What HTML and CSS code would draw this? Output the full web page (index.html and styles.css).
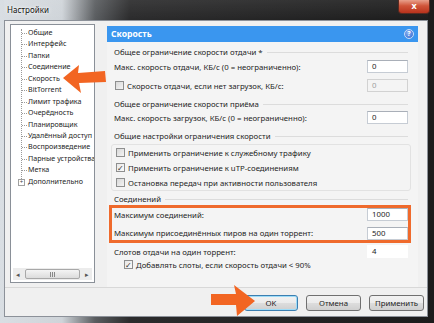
FILE: index.html
```html
<!DOCTYPE html>
<html lang="ru">
<head>
<meta charset="utf-8">
<title>Настройки</title>
<link rel="stylesheet" href="styles.css">
</head>
<body>
<div class="window">
  <div class="titlebar">
    <span class="title">Настройки</span>
    <span class="close">x</span>
  </div>
  <div class="client">
    <div class="main">
      <div class="tree">
        <div class="tree-list">
          <div class="item">Общие</div>
          <div class="item">Интерфейс</div>
          <div class="item">Папки</div>
          <div class="item">Соединение</div>
          <div class="item">Скорость</div>
          <div class="item">BitTorrent</div>
          <div class="item">Лимит трафика</div>
          <div class="item">Очерёдность</div>
          <div class="item">Планировщик</div>
          <div class="item">Удалённый доступ</div>
          <div class="item">Воспроизведение</div>
          <div class="item">Парные устройства</div>
          <div class="item">Метка</div>
          <div class="item last"><span class="plus">+</span>Дополнительно</div>
        </div>
        <div class="hscroll">
          <span class="arr">◂</span>
          <span class="thumb"><span class="grip"></span></span>
          <span class="arr">▸</span>
        </div>
      </div>
      <div class="panel">
        <div class="header">
          <span>Скорость</span>
          <span class="help">?</span>
        </div>
        <div class="content">
          <div class="glabel">Общее ограничение скорости отдачи *</div>
          <div class="row r1"><span>Макс. скорость отдачи, КБ/с (0 = неограниченно):</span><span class="input">0</span></div>
          <div class="row r2"><span class="cbl"><span class="cb"></span>Скорость отдачи, если нет загрузок, КБ/с:</span><span class="input dis">0</span></div>
          <div class="glabel g2">Общее ограничение скорости приёма</div>
          <div class="row r3"><span>Макс. скорость загрузок, КБ/с (0 = неограниченно):</span><span class="input">0</span></div>
          <div class="glabel g3">Общие настройки ограничения скорости</div>
          <div class="group3">
            <div class="cbrow"><span class="cb"></span>Применить ограничение к служебному трафику</div>
            <div class="cbrow"><span class="cb on">✓</span>Применить ограничение к uTP-соединениям</div>
            <div class="cbrow"><span class="cb"></span>Остановка передач при активности пользователя</div>
          </div>
          <div class="glabel g4">Соединений</div>
          <div class="hl">
            <div class="row h1"><span>Максимум соединений:</span><span class="input">1000</span></div>
            <div class="row h2"><span>Максимум присоединённых пиров на один торрент:</span><span class="input">500</span></div>
          </div>
          <div class="row r4"><span>Слотов отдачи на один торрент:</span><span class="input plain">4</span></div>
          <div class="cbrow sub"><span class="cb on">✓</span>Добавлять слоты, если скорость отдачи &lt; 90%</div>
        </div>
      </div>
    </div>
    <div class="buttons">
      <span class="btn def">OK</span>
      <span class="btn">Отмена</span>
      <span class="btn">Применить</span>
    </div>
  </div>
  <svg class="arrow a1" width="50" height="32" viewBox="0 0 50 32"><polygon points="1,14 17,1 16,9 43,7 44,18 17,19 19,29" fill="#f26522"/></svg>
  <svg class="arrow a2" width="52" height="36" viewBox="0 0 52 36"><polygon points="48,18 27,2 29,11 4,11 4,22 29,22 30,33" fill="#f26522"/></svg>
</div>
</body>
</html>
```
FILE: styles.css
```css
* { box-sizing: border-box; }
html, body { margin: 0; padding: 0; }
body {
  width: 434px; height: 323px; overflow: hidden;
  font-family: "Noto Sans", "Open Sans", sans-serif;
  font-size: 7.8px; color: #1e1e1e;
  background: #222;
}
.window {
  position: relative;
  width: 434px; height: 323px;
  display: flex; flex-direction: column;
  background: linear-gradient(90deg, #d9dee3 0px, #cfd4d9 62px, #5a5d60 95px, #2b2b2c 130px, #1c1c1c 100%);
  padding: 0 6px 6px 4px;
}
.titlebar {
  height: 20px; flex: none;
  display: flex; align-items: flex-start; justify-content: space-between;
  background: linear-gradient(180deg, rgba(255,255,255,0.08), rgba(0,0,0,0));
}
.title {
  margin: 4px 0 0 3px;
  font-size: 8px; color: #111;
  text-shadow: 0 0 4px #fff, 0 0 2px #fff;
}
.close {
  width: 32px; height: 14px; margin-right: -2px;
  background: linear-gradient(180deg, #e8a08c 0%, #d0553a 45%, #b8321c 100%);
  border: 1px solid #5a2a20; border-top: none;
  border-radius: 0 0 4px 4px;
  color: #fff; font-weight: bold; font-size: 9px; line-height: 11px;
  text-align: center;
}
.client {
  flex: 1;
  background: #f0f0f0;
  border: 1px solid #8c9199;
  display: flex; flex-direction: column;
}
.main { display: flex; height: 266px; padding-top: 3px; }
.tree {
  width: 85px; height: 259px; margin-left: 5px;
  background: #fff; border: 1px solid #8a9098;
  display: flex; flex-direction: column; justify-content: space-between;
  overflow: hidden;
}
.tree-list { padding: 2px 0 0 0; position: relative; }
.tree-list::before {
  content: ""; position: absolute; left: 10px; top: 4px; height: 152px;
  border-left: 1px dotted #9a9a9a;
}
.item {
  height: 11.45px; line-height: 11.45px; white-space: nowrap;
  padding-left: 17px; position: relative; font-size: 7.15px;
}
.item::before {
  content: ""; position: absolute; left: 11px; top: 6px; width: 5px;
  border-top: 1px dotted #9a9a9a;
}
.item.last::before { display: none; }
.plus {
  position: absolute; left: 7px; top: 3px; width: 7px; height: 7px;
  border: 1px solid #a0a0a0; background: #fff;
  font-size: 6px; line-height: 5px; text-align: center; color: #444;
}
.hscroll {
  height: 12px; margin: 0 2px 2px 2px;
  display: flex; align-items: center; gap: 2px;
  background: #ececec;
}
.arr { width: 10px; font-size: 7px; color: #555; text-align: center; }
.thumb {
  flex: 1; height: 10px;
  border: 1px solid #a8a8a8; border-radius: 2px;
  background: linear-gradient(180deg, #f4f4f4, #dcdcdc);
  display: flex; align-items: center; justify-content: center;
}
.grip { width: 5px; height: 5px; border-left: 1px solid #888; border-right: 1px solid #888; position: relative; }
.grip::after { content: ""; position: absolute; left: 1px; top: 0; height: 5px; border-left: 1px solid #888; }
.panel {
  width: 311px; margin-left: 12px; margin-top: 2px;
  display: flex; flex-direction: column;
}
.header {
  height: 16px; flex: none;
  background: #3a96ef;
  color: #fff; font-weight: bold; font-size: 8.6px;
  display: flex; align-items: center; justify-content: space-between;
  padding: 0 4px 0 4px;
}
.help {
  width: 10px; height: 10px; border-radius: 50%;
  background: radial-gradient(circle at 40% 35%, #8cb4f4, #2c63cc);
  border: 1px solid #c8dcf8;
  font-size: 7px; line-height: 8px; text-align: center; font-weight: bold;
}
.content {
  flex: 1; padding: 0 10px 0 7px;
  display: flex; flex-direction: column;
  background: #f4f4f4;
}
.glabel { height: 12px; line-height: 12px; margin-top: 4px; white-space: nowrap; display: flex; gap: 4px; align-items: center; }
.glabel::after { content: ""; flex: 1; border-top: 1px solid #dcdcdc; }
.g2 { margin-top: 5px; }
.g3 { margin-top: 5px; }
.g4 { margin-top: 2px; }
.row {
  display: flex; align-items: center; justify-content: space-between;
  height: 15px; white-space: nowrap;
}
.r1 { margin-top: 1px; }
.r2 { margin-top: 4px; }
.r3 { margin-top: 0; }
.input {
  width: 41px; height: 13px;
  background: #fff; border: 1px solid #c6ccd4; border-top-color: #a9afb8;
  padding-left: 4px; line-height: 11px; font-size: 7.8px;
}
.input.dis { background: #f4f4f4; color: #a0a0a0; border-color: #d2d2d2; }
.input.plain { border-color: #fff; }
.cbl { display: flex; align-items: center; }
.cb {
  width: 9px; height: 9px; flex: none; margin: 0 3px 0 1px;
  border: 1px solid #8e8f8f;
  background: linear-gradient(135deg, #d8d8d8, #f4f4f4);
  font-size: 8px; line-height: 7px; text-align: center; color: #333;
}
.cb.on { background: linear-gradient(135deg, #e8e8e8, #fafafa); }
.group3 {
  margin: 2px -3px 0 -3px; padding: 0 3px;
  border: 1px solid #e2e2e2; border-radius: 3px;
}
.cbrow { height: 15px; display: flex; align-items: center; white-space: nowrap; }
.hl {
  margin: 0 -3px 0 -5px; padding: 0 0 0 2px;
  border: 3px solid #ef6a2c;
}
.h1 { height: 13px; }
.h2 { height: 14px; margin-top: 5px; }
.r4 { height: 13px; margin-top: 2px; }
.cbrow.sub { padding-left: 9px; height: 13px; }
.buttons {
  flex: 1;
  border-top: 1px solid #d8d8d8;
  display: flex; justify-content: flex-end; align-items: flex-start;
  padding: 7px 3px 0 0; gap: 8px;
}
.btn {
  width: 55px; height: 16px;
  border: 1px solid #707070; border-radius: 3px;
  background: linear-gradient(180deg, #f2f2f2 0%, #ebebeb 50%, #dddddd 51%, #cfcfcf 100%);
  text-align: center; line-height: 14px; font-size: 7.8px;
}
.btn.def { border-color: #3c7fb1; box-shadow: inset 0 0 0 1px #9ddcf8; width: 54px; }
.arrow { position: absolute; }
.a1 { left: 62px; top: 64px; }
.a2 { left: 207px; top: 283px; }
```
